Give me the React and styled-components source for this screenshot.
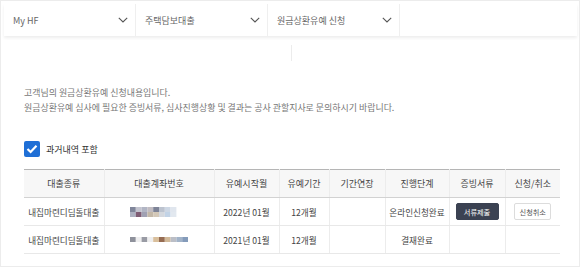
import React from "react";
import styled, { createGlobalStyle } from "styled-components";

const GlobalStyle = createGlobalStyle`
  html, body {
    margin: 0;
    padding: 0;
    background: #fff;
  }
  * {
    box-sizing: border-box;
  }
  body {
    font-family: "Noto Sans CJK KR", "Noto Sans", sans-serif;
  }
`;

const MENUS = ["My HF", "주택담보대출", "원금상환유예 신청"];

const COLUMNS = [
  { title: "대출종류", width: 80 },
  { title: "대출계좌번호", width: 110 },
  { title: "유예시작월", width: 65 },
  { title: "유예기간", width: 50 },
  { title: "기간연장", width: 56 },
  { title: "진행단계", width: 64 },
  { title: "증빙서류", width: 56 },
  { title: "신청/취소", width: 55 },
];

const ROWS = [
  {
    id: 1,
    kind: "내집마련디딤돌대출",
    mosaic: [
      ["#80869a", "#c3c4cf", "#b1b5c4", "#c1bcc1", "#7d8397", "#bcc3cf", "#cdd7e4", "#e0e6ee", "", ""],
      ["#adb1c1", "#7f5d74", "#a0a1b3", "#c3b8a8", "#d3c8b8", "#d4d8de", "#c2d3e6", "#e2e8ef", "", ""],
    ],
    start: "2022년 01월",
    period: "12개월",
    step: "온라인신청완료",
    actions: true,
  },
  {
    id: 2,
    kind: "내집마련디딤돌대출",
    mosaic: [
      ["#8e919b", "#eeeeef", "#999ba4", "#eeeeef", "#d9bf9c", "#966c52", "#d1b999", "#bbbec6", "#a2b3c8", "#849bba"],
    ],
    start: "2021년 01월",
    period: "12개월",
    step: "결재완료",
    actions: false,
  },
];

function Chevron() {
  return (
    <svg width="10" height="6" viewBox="0 0 10 6">
      <path d="M0.8 0.8 L5 5 L9.2 0.8" fill="none" stroke="#555" strokeWidth="1.1" />
    </svg>
  );
}

function Mosaic({ cells }) {
  return (
    <svg width="58" height={cells.length * 5} viewBox={`0 0 58 ${cells.length * 5}`}>
      {cells.map((row, r) =>
        row.map((c, i) =>
          c ? <rect key={`${r}-${i}`} x={i * 5.8} y={r * 5} width="5.8" height="5" fill={c} /> : null
        )
      )}
    </svg>
  );
}

function App() {
  return (
    <>
      <GlobalStyle />
      <Page>
        <Nav>
          {MENUS.map(menu => (
            <NavItem key={menu}>
              <span>{menu}</span>
              <Chevron />
            </NavItem>
          ))}
          <NavRest />
        </Nav>
        <Divider />
        <Notice>
          <p>고객님의 원금상환유예 신청내용입니다.</p>
          <p>원금상환유예 심사에 필요한 증빙서류, 심사진행상황 및 결과는 공사 관할지사로 문의하시기 바랍니다.</p>
        </Notice>
        <CheckRow>
          <CheckBox>
            <svg width="12" height="10" viewBox="0 0 12 10">
              <path d="M1.5 5 L4.6 8 L10.5 1.8" fill="none" stroke="#fff" strokeWidth="2.2" />
            </svg>
          </CheckBox>
          <span>과거내역 포함</span>
        </CheckRow>
        <Table>
          <colgroup>
            {COLUMNS.map(col => (
              <col key={col.title} style={{ width: col.width }} />
            ))}
          </colgroup>
          <thead>
            <tr>
              {COLUMNS.map(col => (
                <Th key={col.title}>{col.title}</Th>
              ))}
            </tr>
          </thead>
          <tbody>
            {ROWS.map(row => (
              <tr key={row.id}>
                <Td>{row.kind}</Td>
                <Td>
                  <Mosaic cells={row.mosaic} />
                </Td>
                <Td>{row.start}</Td>
                <Td>{row.period}</Td>
                <Td />
                <Td>{row.step}</Td>
                <Td>{row.actions && <Button dark>서류제출</Button>}</Td>
                <Td>{row.actions && <Button>신청취소</Button>}</Td>
              </tr>
            ))}
          </tbody>
        </Table>
      </Page>
    </>
  );
}

export default App;

const Page = styled.div`
  width: 580px;
  height: 267px;
  border: 1px solid #ececec;
  padding: 3px 0 0 3px;
  overflow: hidden;
`;

const Nav = styled.div`
  display: flex;
  width: 573px;
  height: 32px;
  background: #fff;
  box-shadow: 0 2px 3px rgba(0, 0, 0, 0.07);
`;

const NavItem = styled.div`
  display: flex;
  align-items: center;
  justify-content: space-between;
  width: 132px;
  padding: 0 7px 0 9px;
  border-right: 1px solid #efefef;
  font-size: 9px;
  color: #666;
`;

const NavRest = styled.div`
  flex: 1;
`;

const Divider = styled.div`
  width: 1px;
  height: 16px;
  margin: 9px 0 0 287px;
  background: #ececec;
`;

const Notice = styled.div`
  margin: 24px 0 0 20px;
  font-size: 8.95px;
  line-height: 15px;
  color: #777;

  p {
    margin: 0;
  }
`;

const CheckRow = styled.div`
  display: flex;
  align-items: center;
  gap: 6px;
  margin: 26px 0 0 20px;
  font-size: 9px;
  color: #333;
`;

const CheckBox = styled.div`
  display: flex;
  align-items: center;
  justify-content: center;
  width: 16px;
  height: 16px;
  border-radius: 2px;
  background: #1f6fd6;
`;

const Table = styled.table`
  width: 536px;
  margin: 12px 0 0 20px;
  border-collapse: collapse;
  table-layout: fixed;
  border-top: 1px solid #b5b5b5;
  font-size: 8.6px;
  color: #444;
`;

const Th = styled.th`
  height: 28px;
  padding: 0;
  background: #f7f7f7;
  font-weight: 400;
  font-size: 9px;
  text-align: center;
  border-bottom: 1px solid #d2d2d2;
  border-left: 1px solid #ececec;

  &:first-child {
    border-left: none;
  }
`;

const Td = styled.td`
  height: 28px;
  padding: 0;
  text-align: center;
  vertical-align: middle;
  border-bottom: 1px solid #e8e8e8;
  border-left: 1px solid #ececec;

  &:first-child {
    border-left: none;
  }

  svg {
    display: block;
    margin: 0 auto;
  }
`;

const Button = styled.span`
  display: inline-flex;
  align-items: center;
  justify-content: center;
  width: ${({ dark }) => (dark ? "43px" : "37px")};
  height: 17px;
  border-radius: 2px;
  font-size: 7.2px;
  color: ${({ dark }) => (dark ? "#fff" : "#555")};
  background: ${({ dark }) => (dark ? "#3b4252" : "#fff")};
  border: 1px solid ${({ dark }) => (dark ? "#3b4252" : "#dcdcdc")};
`;
